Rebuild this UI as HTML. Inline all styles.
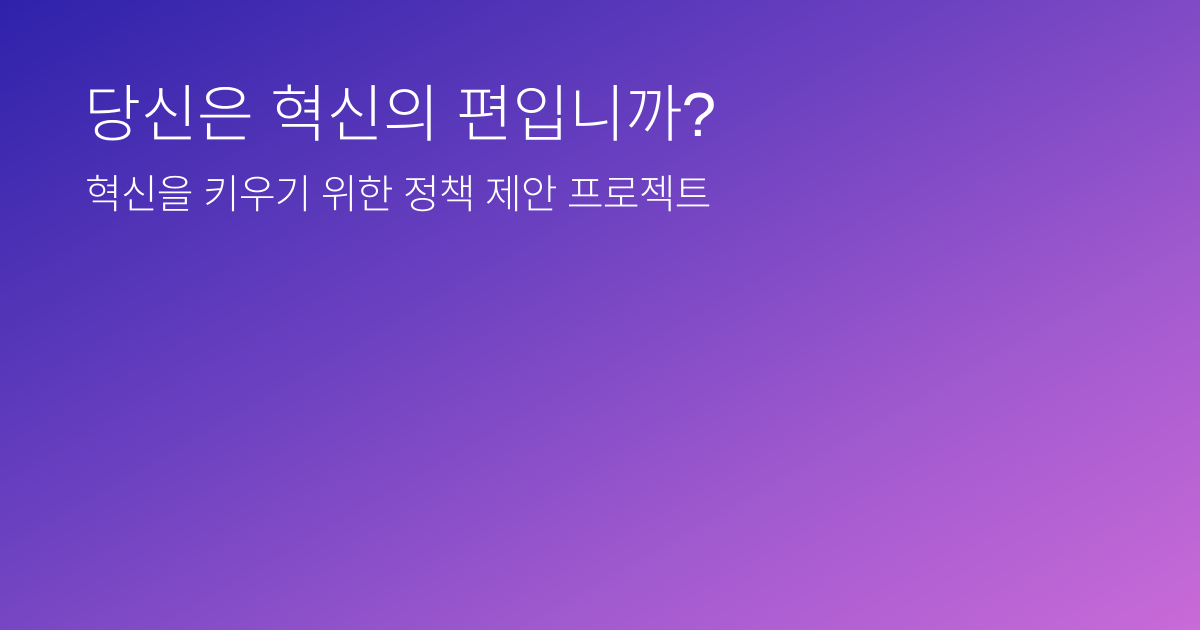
<!DOCTYPE html>
<html><head><meta charset="utf-8"><style>
html,body{margin:0;padding:0}
body{width:1200px;height:630px;overflow:hidden;background:linear-gradient(150deg,#2e22aa 0%,#6a40c0 40%,#a25acf 72%,#c96ad8 100%);font-family:"Liberation Sans","Noto Sans CJK KR",sans-serif;color:#fff;position:relative}
.t{position:absolute;left:84px;top:80px;font-size:62px;line-height:72px;letter-spacing:-0.6px;font-weight:300;white-space:nowrap}
.s{position:absolute;left:85px;top:171px;font-size:40px;line-height:48px;letter-spacing:-0.9px;font-weight:300;white-space:nowrap}
</style></head><body>
<div class="t">당신은 혁신의 편입니까?</div>
<div class="s">혁신을 키우기 위한 정책 제안 프로젝트</div>
</body></html>
